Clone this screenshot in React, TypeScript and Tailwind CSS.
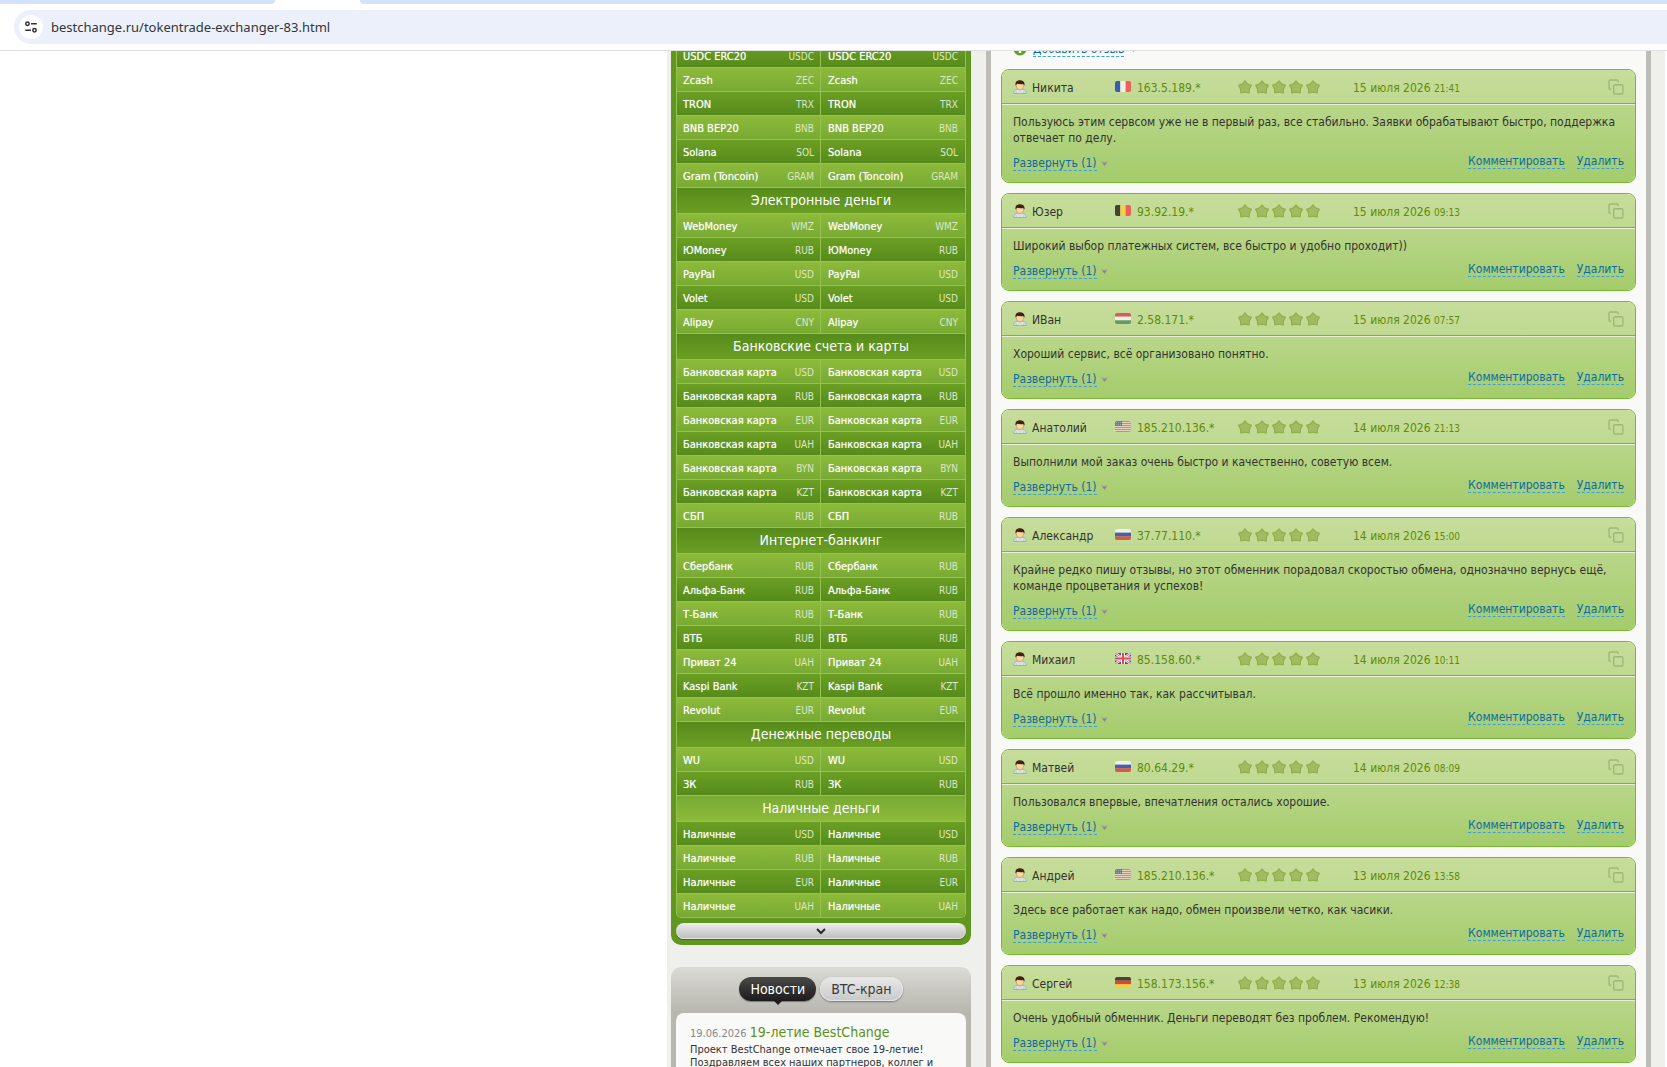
import type { ReactNode } from "react";

type Pair = [name: string, code: string];

interface CurrencyGroup {
  title?: string;
  items: Pair[];
}

interface Review {
  name: string;
  flag: string;
  ip: string;
  date: string;
  time: string;
  text: string;
}

const groups: CurrencyGroup[] = [
  {
    items: [
      ["USDC ERC20", "USDC"],
      ["Zcash", "ZEC"],
      ["TRON", "TRX"],
      ["BNB BEP20", "BNB"],
      ["Solana", "SOL"],
      ["Gram (Toncoin)", "GRAM"],
    ],
  },
  {
    title: "Электронные деньги",
    items: [
      ["WebMoney", "WMZ"],
      ["ЮMoney", "RUB"],
      ["PayPal", "USD"],
      ["Volet", "USD"],
      ["Alipay", "CNY"],
    ],
  },
  {
    title: "Банковские счета и карты",
    items: [
      ["Банковская карта", "USD"],
      ["Банковская карта", "RUB"],
      ["Банковская карта", "EUR"],
      ["Банковская карта", "UAH"],
      ["Банковская карта", "BYN"],
      ["Банковская карта", "KZT"],
      ["СБП", "RUB"],
    ],
  },
  {
    title: "Интернет-банкинг",
    items: [
      ["Сбербанк", "RUB"],
      ["Альфа-Банк", "RUB"],
      ["Т-Банк", "RUB"],
      ["ВТБ", "RUB"],
      ["Приват 24", "UAH"],
      ["Kaspi Bank", "KZT"],
      ["Revolut", "EUR"],
    ],
  },
  {
    title: "Денежные переводы",
    items: [
      ["WU", "USD"],
      ["ЗК", "RUB"],
    ],
  },
  {
    title: "Наличные деньги",
    items: [
      ["Наличные", "USD"],
      ["Наличные", "RUB"],
      ["Наличные", "EUR"],
      ["Наличные", "UAH"],
    ],
  },
];

const reviews: Review[] = [
  { name: "Никита", flag: "fr", ip: "163.5.189.*", date: "15 июля 2026", time: "21:41", text: "Пользуюсь этим сервсом уже не в первый раз, все стабильно. Заявки обрабатывают быстро, поддержка отвечает по делу." },
  { name: "Юзер", flag: "be", ip: "93.92.19.*", date: "15 июля 2026", time: "09:13", text: "Широкий выбор платежных систем, все быстро и удобно проходит))" },
  { name: "ИВан", flag: "hu", ip: "2.58.171.*", date: "15 июля 2026", time: "07:57", text: "Хороший сервис, всё организовано понятно." },
  { name: "Анатолий", flag: "us", ip: "185.210.136.*", date: "14 июля 2026", time: "21:13", text: "Выполнили мой заказ очень быстро и качественно, советую всем." },
  { name: "Александр", flag: "ru", ip: "37.77.110.*", date: "14 июля 2026", time: "15:00", text: "Крайне редко пишу отзывы, но этот обменник порадовал скоростью обмена, однозначно вернусь ещё, команде процветания и успехов!" },
  { name: "Михаил", flag: "gb", ip: "85.158.60.*", date: "14 июля 2026", time: "10:11", text: "Всё прошло именно так, как рассчитывал." },
  { name: "Матвей", flag: "ru", ip: "80.64.29.*", date: "14 июля 2026", time: "08:09", text: "Пользовался впервые, впечатления остались хорошие." },
  { name: "Андрей", flag: "us", ip: "185.210.136.*", date: "13 июля 2026", time: "13:58", text: "Здесь все работает как надо, обмен произвели четко, как часики." },
  { name: "Сергей", flag: "de", ip: "158.173.156.*", date: "13 июля 2026", time: "12:38", text: "Очень удобный обменник. Деньги переводят без проблем. Рекомендую!" },
];

const vertical: Record<string, string[]> = {
  fr: ["#3b5bb0", "#eef0e6", "#ef5f5c"],
  be: ["#3f4238", "#f3d04e", "#ef5f5c"],
};

const horizontal: Record<string, string[]> = {
  hu: ["#d95a5a", "#eef0e6", "#649a6a"],
  ru: ["#eef0e6", "#3b62b4", "#d95748"],
  de: ["#45453c", "#dd4632", "#f6cf3c"],
};

function Flag({ code }: { code: string }) {
  return (
    <svg width="16" height="11" viewBox="0 0 16 11" className="shrink-0 overflow-hidden rounded-[2px]" aria-hidden="true">
      {vertical[code]?.map((fill, i) => <rect key={i} x={i * 5.33} width="5.4" height="11" fill={fill} />)}
      {horizontal[code]?.map((fill, i) => <rect key={i} y={i * 3.67} width="16" height="3.7" fill={fill} />)}
      {code === "us" && (
        <>
          <rect width="16" height="11" fill="#e6d3c0" />
          {[0, 2, 4, 6, 8, 10].map((y) => <rect key={y} y={y} width="16" height="1" fill="#d5837f" />)}
          <rect width="7" height="5" fill="#6b7ba6" />
          <path d="M1 1.5h5M1 3.5h5" stroke="#a9b4c6" strokeWidth="0.8" strokeDasharray="1 1" />
        </>
      )}
      {code === "gb" && (
        <>
          <rect width="16" height="11" fill="#3d4fa5" />
          <path d="M0 0l16 11M16 0L0 11" stroke="#eef0f0" strokeWidth="2.4" />
          <path d="M0 0l16 11M16 0L0 11" stroke="#dd6263" strokeWidth="0.9" />
          <path d="M8 0v11M0 5.5h16" stroke="#eef0f0" strokeWidth="4" />
          <path d="M8 0v11M0 5.5h16" stroke="#de4b4e" strokeWidth="2" />
        </>
      )}
    </svg>
  );
}

function UserIcon() {
  return (
    <svg width="14" height="14" viewBox="0 0 14 14" className="shrink-0" aria-hidden="true">
      <path d="M.5 13.5c0-2.6 1.2-4 3.7-4.3h5.6c2.5.3 3.7 1.7 3.7 4.3z" fill="#d3e4ea" stroke="#8fa9b2" strokeWidth="0.8" />
      <path d="M4.6 9L7 12.4 9.4 9z" fill="#f3cf9f" />
      <path d="M3.2 13v-1.8M10.8 13v-1.8" stroke="#9fb6c0" strokeWidth="0.7" />
      <ellipse cx="7" cy="5.8" rx="3.6" ry="3.9" fill="#f8d6a8" stroke="#b98a55" strokeWidth="0.6" />
      <path d="M2.6 5.6C1.8 2 4 .2 7 .2s5.2 1.600 4.400 5.400c-.6-.6-.8-1.300-1.200-1.700-2 .4-4.400.3-6-.1-.6.5-.9 1.200-1.600 1.800z" fill="#43200f" />
    </svg>
  );
}

function Star() {
  return (
    <svg width="14" height="14" viewBox="0 0 14 14" aria-hidden="true">
      <path
        d="M7 .8l2.600 3.100 3.800 1.400-1.900 3.600-.3 4.100L7 12.200l-4.200.8-.3-4.100L.6 5.300l3.800-1.400z"
        fill="#a2bb62"
        stroke="#91af4b"
        strokeWidth="1.2"
        strokeLinejoin="round"
      />
    </svg>
  );
}

function CopyIcon() {
  return (
    <svg width="16" height="16" viewBox="0 0 16 16" fill="none" stroke="#9fb87a" strokeWidth="1.4" strokeLinecap="round" aria-hidden="true">
      <rect x="5.7" y="5.7" width="9.3" height="9.3" rx="1.5" />
      <path d="M2.6 10.3C1.5 10.3 1 9.8 1 8.8V2.5C1 1.500 1.500 1 2.500 1h6.300c1 0 1.500.5 1.500 1.600" />
    </svg>
  );
}

function Arrow() {
  return (
    <svg width="7" height="5" viewBox="0 0 7 5" aria-hidden="true">
      <path d="M0 0h7L3.500 5z" fill="#858b80" />
      <path d="M0 0h7L6 1.500H1z" fill="#b3b3b3" />
    </svg>
  );
}

function DashedButton({ children }: { children: ReactNode }) {
  return (
    <button type="button" className="h-4 border-b border-dashed border-[#3aa0dc] leading-4 text-[#0b6ba8]">
      {children}
    </button>
  );
}

function AddressBar() {
  return (
    <header className="shrink-0 border-b border-[#dfdfdf] bg-white">
      <div className="flex h-1 gap-[85px]">
        <div className="w-[275px] rounded-br-lg bg-[#d3e3fd]" />
        <div className="flex-1 rounded-bl-lg bg-[#d3e3fd]" />
      </div>
      <div className="pt-1.5 pb-1.5 pl-3.5">
        <div className="flex h-[34px] items-center gap-2 rounded-l-full bg-[#ebf0fa] pl-[5px]">
          <button type="button" aria-label="Сведения о сайте" className="flex size-6 items-center justify-center rounded-full bg-white">
            <svg width="12" height="12" viewBox="0 0 12 12" fill="none" stroke="#303236" strokeWidth="1.5" aria-hidden="true">
              <circle cx="2.5" cy="2.8" r="1.7" />
              <path d="M6 2.8h5.8M.3 9.2H6" />
              <circle cx="9.5" cy="9.2" r="1.7" />
            </svg>
          </button>
          <input
            aria-label="Адрес"
            defaultValue="bestchange.ru/tokentrade-exchanger-83.html"
            className="min-w-0 flex-1 bg-transparent pt-0.5 font-['Noto_Sans',sans-serif] text-[13px] text-[#33353a] outline-none"
          />
        </div>
      </div>
    </header>
  );
}

function CurrencyTable() {
  let index = 0;
  return (
    <div className="-mt-2 rounded-b-[10px] bg-[#619620] px-[5px] pb-1.5">
      <div className="overflow-hidden rounded-b-[5px] border-x border-b border-[#94c34f]">
        <table className="w-full table-fixed border-separate border-spacing-0 text-[11px] text-white">
          <tbody>
            {groups.map((group, g) => {
              const rows: ReactNode[] = [];
              if (group.title) {
                const dark = index++ % 2 === 0;
                rows.push(
                  <tr key={`title-${g}`}>
                    <th
                      colSpan={2}
                      className={`h-[26px] border-t border-[#94c34f] bg-linear-to-b p-0 pb-0.5 text-sm leading-5 font-normal ${dark ? "from-[#568b1c] to-[#6b9f23]" : "from-[#78aa33] to-[#8dba3a]"}`}
                    >
                      {group.title}
                    </th>
                  </tr>,
                );
              }
              group.items.forEach(([name, code], i) => {
                const dark = index++ % 2 === 0;
                const shade = dark ? "from-[#6b9f23] to-[#568b1c]" : "from-[#8dba3a] to-[#78aa33]";
                rows.push(
                  <tr key={`${g}-${i}`}>
                    {[0, 1].map((col) => (
                      <td key={col} className={`h-6 border-t border-[#94c34f] bg-linear-to-b p-0 pt-0.5 ${shade} ${col === 0 ? "border-r pr-1.5 pl-1.5" : "px-[7px]"}`}>
                        <a href="#" className="flex items-center justify-between leading-4">
                          <span className="[text-shadow:0_0_1px_rgba(255,255,255,0.6)]">{name}</span>
                          <span className="text-[10px] text-[#dce7cb]">{code}</span>
                        </a>
                      </td>
                    ))}
                  </tr>,
                );
              });
              return rows;
            })}
          </tbody>
        </table>
      </div>
      <button
        type="button"
        aria-label="Показать ещё"
        className="mt-[5px] flex h-4 w-full items-center justify-center rounded-full bg-linear-to-b from-[#eeeeee] to-[#bcbcbc] shadow-[0_1px_1px_#3f6a14,inset_0_-1px_0_#e2e2e2]"
      >
        <svg width="10" height="7" viewBox="0 0 10 7" fill="none" stroke="#2b2b2b" strokeWidth="2" aria-hidden="true">
          <path d="M1 1l4 4 4-4" />
        </svg>
      </button>
    </div>
  );
}

function News() {
  return (
    <section className="mt-[22px] rounded-t-[10px] bg-linear-to-b from-[#dbdbd5] from-0% to-[#b7b6af] to-[46px] px-[5px] pt-2.5">
      <div className="flex items-start justify-center gap-1 text-sm">
        <button type="button" className="relative h-6 rounded-full bg-linear-to-b from-[#4a4a4a] to-[#1c1c1c] px-[11px] text-white shadow-[0_1px_1px_#77776f]">
          Новости
          <span className="absolute top-full left-1/2 -translate-x-1/2 border-x-4 border-t-4 border-x-transparent border-t-[#1c1c1c]" />
        </button>
        <button type="button" className="h-6 rounded-full bg-linear-to-b from-[#e9e9e9] to-[#c9c9c9] px-[11px] text-[#3a3a3a] shadow-[0_1px_2px_#77776f,inset_0_0_0_1px_#e4e4e4]">
          BTC-кран
        </button>
      </div>
      <article className="mt-3 rounded-t-[8px] bg-[#f9f9f7] px-3.5 pt-2.5 pb-4 text-[11px] leading-[13px] text-[#333333]">
        <h3 className="leading-[18px]">
          <span className="text-[#888888]">19.06.2026</span>{" "}
          <a href="#" className="text-sm leading-[18px] text-[#5a9216]">19-летие BestChange</a>
        </h3>
        <p>Проект BestChange отмечает свое 19-летие! Поздравляем всех наших партнеров, коллег и</p>
      </article>
    </section>
  );
}

function ReviewCard({ review }: { review: Review }) {
  return (
    <article className="overflow-hidden rounded-[8px] border border-[#76b82f]">
      <div className="grid h-[34px] grid-cols-[102px_123px_115px_1fr_16px] items-center border-b border-[#76b82f] bg-linear-to-b from-[#c7dd9b] to-[#bfd991] px-[11px] text-[#5f8b07]">
        <div className="flex items-center gap-[5px] text-[#333333]">
          <UserIcon />
          <span className="pt-0.5">{review.name}</span>
        </div>
        <div className="flex items-center gap-1.5">
          <Flag code={review.flag} />
          <span className="pt-0.5">{review.ip}</span>
        </div>
        <div className="flex gap-[3px]">
          {[1, 2, 3, 4, 5].map((n) => <Star key={n} />)}
        </div>
        <div className="pt-0.5">
          {review.date} <span className="text-[10px]">{review.time}</span>
        </div>
        <button type="button" aria-label="Копировать ссылку">
          <CopyIcon />
        </button>
      </div>
      <div className="border-t border-[#e9f2d8] bg-linear-to-b from-[#b9d689] to-[#a4cc6b] px-[11px] pt-[9px] pb-[11px] leading-4 text-[#333333]">
        <p>{review.text}</p>
        <div className="mt-[7px] flex h-[18px] items-start justify-between">
          <div className="flex items-center gap-1 pt-0.5">
            <DashedButton>Развернуть (1)</DashedButton>
            <Arrow />
          </div>
          <div className="flex gap-3">
            <DashedButton>Комментировать</DashedButton>
            <DashedButton>Удалить</DashedButton>
          </div>
        </div>
      </div>
    </article>
  );
}

export default function App() {
  return (
    <div className="flex h-screen flex-col overflow-hidden bg-white font-['DejaVu_Sans_Condensed','DejaVu_Sans',sans-serif] text-xs">
      <AddressBar />
      <div className="min-h-0 flex-1 overflow-hidden pr-0.5">
        <div className="ml-auto flex w-full max-w-[998px] bg-[#efefeb]">
          <aside className="w-[319px] shrink-0 pr-[15px] pl-1">
            <CurrencyTable />
            <News />
          </aside>
          <main className="mr-3.5 min-w-0 flex-1 border-x-[5px] border-[#bdbcb6] bg-[#f9f9f7] px-2.5">
            <div className="-mt-2.5 mb-3 flex items-center gap-1.5 pl-3">
              <svg width="14" height="14" viewBox="0 0 14 14" aria-hidden="true">
                <circle cx="7" cy="7" r="6.5" fill="#5fa224" />
                <path d="M7 3v8M3 7h8" stroke="#ffffff" strokeWidth="2.5" />
              </svg>
              <DashedButton>Добавить отзыв</DashedButton>
              <Arrow />
            </div>
            <div className="flex flex-col gap-2.5">
              {reviews.map((review, i) => <ReviewCard key={i} review={review} />)}
            </div>
          </main>
        </div>
      </div>
    </div>
  );
}
